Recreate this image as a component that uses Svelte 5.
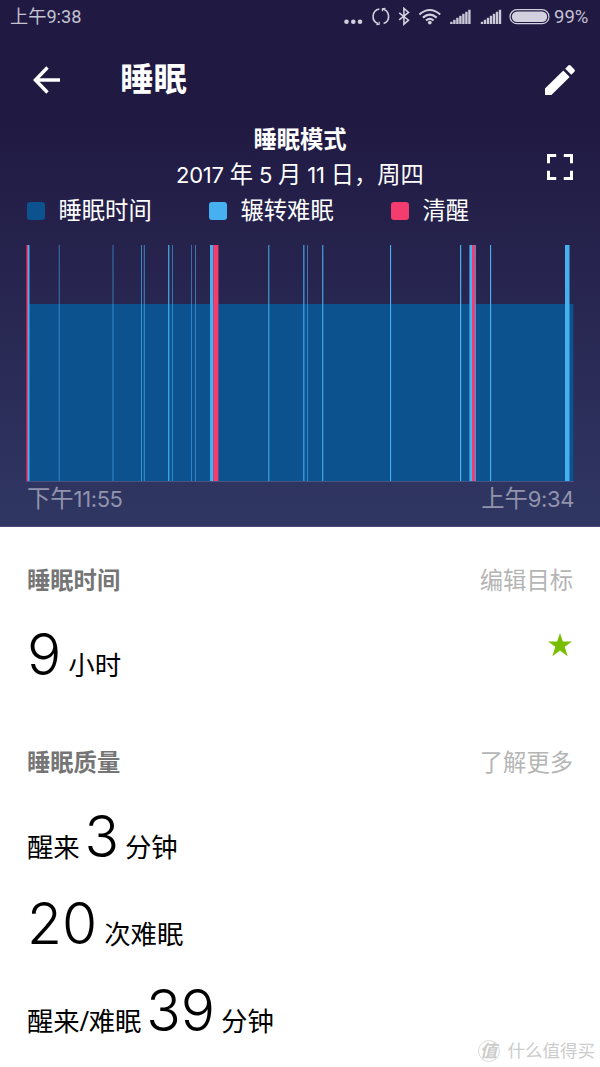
<script lang="ts">
	const legend = [
		{ label: '睡眠时间', kind: 'asleep' },
		{ label: '辗转难眠', kind: 'restless' },
		{ label: '清醒', kind: 'awake' }
	];

	// x and width are in chart pixels
	const events = [
		{ x: 0.5, w: 1.5, kind: 'awake' },
		{ x: 2, w: 1.5, kind: 'restless' },
		{ x: 32.85, w: 0.6, kind: 'restless' },
		{ x: 86.7, w: 0.6, kind: 'restless' },
		{ x: 115, w: 0.7, kind: 'restless' },
		{ x: 117.85, w: 0.7, kind: 'restless' },
		{ x: 142.15, w: 1.2, kind: 'restless' },
		{ x: 146.2, w: 0.6, kind: 'restless' },
		{ x: 165.2, w: 0.55, kind: 'restless' },
		{ x: 169.2, w: 0.6, kind: 'restless' },
		{ x: 184, w: 3.4, kind: 'restless' },
		{ x: 187.4, w: 5, kind: 'awake' },
		{ x: 242.3, w: 1, kind: 'restless' },
		{ x: 277.3, w: 1.1, kind: 'restless' },
		{ x: 281.2, w: 0.6, kind: 'restless' },
		{ x: 296.2, w: 1.1, kind: 'restless' },
		{ x: 364, w: 1.1, kind: 'restless' },
		{ x: 434, w: 1.2, kind: 'restless' },
		{ x: 443.4, w: 2.6, kind: 'restless' },
		{ x: 446, w: 3, kind: 'awake' },
		{ x: 449, w: 0.8, kind: 'restless' },
		{ x: 464, w: 1.15, kind: 'restless' },
		{ x: 539, w: 4.5, kind: 'restless' }
	];

	const quality = [
		{ before: '醒来', value: '3', after: '分钟' },
		{ before: '', value: '20', after: '次难眠' },
		{ before: '醒来/难眠', value: '39', after: '分钟' }
	];

	const signalBars = [0, 1, 2, 3, 4, 5, 6];
</script>

<div class="screen">
	<header>
		<div class="status">
			<span class="clock">上午9:38</span>
			<svg class="indicators" width="209" height="20" viewBox="0 0 209 20">
				<g fill="#d2cfde">
					<circle cx="4.5" cy="14.8" r="2.3" />
					<circle cx="11.3" cy="14.8" r="2.3" />
					<circle cx="18" cy="14.8" r="2.3" />
				</g>
				<g fill="none" stroke="#d2cfde" stroke-width="1.6">
					<path d="M37.4 2A7.6 7.6 0 0 0 36 16.6M40.4 2A7.6 7.6 0 0 1 41.6 16.6" />
					<path d="M34.4 17.7L37.2 17.2V14.8M43.4 1.3L40.4 1.8V4.2" stroke-width="1.2" />
					<path d="M57.2 5.8l9.3 7.4l-4.6 4V1.4l4.6 4l-9.3 7.4" />
				</g>
				<g fill="none" stroke="#d2cfde" stroke-width="2.1">
					<path d="M77.4 7.5Q87.8-1.5 98.2 7.5" />
					<path d="M80.9 10.6Q87.8 4.6 94.7 10.6" />
					<path d="M84 13.5Q87.8 10.3 91.6 13.5" />
				</g>
				<circle cx="87.8" cy="15.6" r="1.9" fill="#d2cfde" />
				{#each [108.2, 138.8] as start}
					{#each signalBars as i}
						<rect x={start + i * 3} y={14.8 - i * 2} width="2.4" height={2.2 + i * 2} fill="#cbc8d8" />
					{/each}
				{/each}
				<rect x="168" y="2.7" width="39" height="14" rx="7" fill="none" stroke="#d2cfde" stroke-width="1.2" />
				<rect x="169.8" y="4.5" width="35.4" height="10.4" rx="5.2" fill="#d2cfde" />
			</svg>
			<span class="battery">99%</span>
		</div>

		<div class="toolbar">
			<svg class="back" width="28" height="28" viewBox="0 0 28 28">
				<path d="M27 14H2.4M14.5 1.5L2.4 14L14.5 26.5" fill="none" stroke="#fff" stroke-width="3.4" />
			</svg>
			<h1>睡眠</h1>
			<svg class="edit" width="30" height="30" viewBox="0 0 30 30" fill="#fff">
				<path d="M0 23.6V30H6.4L24.7 11.9L18.3 5.4ZM29.4 6.7Q30.4 5.5 29.4 4.4L25.6.6Q24.4-.4 23.3.6L20.2 3.7L26.3 9.8Z" />
			</svg>
		</div>

		<div class="chart-title">
			<h2>睡眠模式</h2>
			<p>
				<span class="num">2017</span> 年 <span class="num">5</span> 月
				<span class="num">11</span> 日，周四
			</p>
			<svg class="expand" width="26" height="26" viewBox="0 0 26 26">
				<path
					d="M1.5 9.2V1.5H9.2M16.8 1.5H24.5V9.2M24.5 16.8V24.5H16.8M9.2 24.5H1.5V16.8"
					fill="none"
					stroke="#fff"
					stroke-width="3"
				/>
			</svg>
		</div>

		<ul class="legend">
			{#each legend as item}
				<li><i class={item.kind}></i>{item.label}</li>
			{/each}
		</ul>

		<svg class="chart" width="548" height="237" viewBox="0 0 548 237">
			<rect x="1" y="59" width="546.4" height="177" class="asleep" />
			{#each events as event}
				<rect x={event.x} y="0" width={event.w} height="236" class={event.kind} />
			{/each}
			<rect x="0" y="236" width="548" height="1" fill="#495483" />
		</svg>

		<div class="range">
			<span>下午<span class="num">11:55</span></span>
			<span>上午<span class="num">9:34</span></span>
		</div>
	</header>

	<section class="duration">
		<div class="section-head">
			<h3>睡眠时间</h3>
			<span>编辑目标</span>
		</div>
		<div class="stat">
			<span class="value">9</span>
			<span>小时</span>
			<svg class="star" width="24" height="24" viewBox="0 0 24 24">
				<path d="M12 0L14.8 8.4H24L16.7 13.7L19.6 23.2L12 17.5L4.4 23.2L7.3 13.7L0 8.4H9.2Z" fill="#78be00" />
			</svg>
		</div>
	</section>

	<section class="quality">
		<div class="section-head">
			<h3>睡眠质量</h3>
			<span>了解更多</span>
		</div>
		{#each quality as row}
			<div class="stat">
				{#if row.before}<span class="label">{row.before}</span>{/if}
				<span class="value">{row.value}</span>
				<span>{row.after}</span>
			</div>
		{/each}
	</section>

	<div class="watermark">
		<span class="seal">值</span>
		<span>什么值得买</span>
	</div>
</div>

<style>
	:global(body) {
		margin: 0;
		background: #fff;
	}

	.screen {
		position: relative;
		width: 600px;
		height: 1067px;
		overflow: hidden;
		background: #fff;
		color: #000;
		font-family: Lato, 'Noto Sans CJK SC', sans-serif;
	}

	h1,
	h2,
	h3,
	p,
	ul {
		margin: 0;
		padding: 0;
	}

	svg {
		display: block;
		flex: none;
	}

	header {
		box-sizing: border-box;
		height: 527px;
		background: linear-gradient(#201942 0, #201942 110px, #25224c 240px, #303763 526px);
		border-bottom: 1px solid #4d4d7c;
		color: #fff;
	}

	.status {
		display: flex;
		align-items: center;
		height: 34px;
		padding: 0 10px;
		font-family: Roboto, 'Noto Sans CJK SC', sans-serif;
		font-size: 18.5px;
		line-height: 36px;
		color: #c5c2d2;
	}

	.clock {
		font-size: 18.2px;
	}

	.indicators {
		margin-left: auto;
	}

	.battery {
		width: 36px;
		margin-left: 3px;
		font-size: 18.5px;
		white-space: nowrap;
	}

	.toolbar {
		display: flex;
		align-items: center;
		height: 92px;
		padding: 0 25px 0 33px;
	}

	h1 {
		margin: -4px 0 0 59px;
		font-size: 33.5px;
		font-weight: 700;
		line-height: 48px;
	}

	.edit {
		margin-left: auto;
	}

	.chart-title {
		display: grid;
		grid-template-columns: 1fr auto 1fr;
		grid-template-rows: 26px 44px;
		align-items: center;
		padding: 0 27px;
		text-align: center;
	}

	h2 {
		grid-column: 2;
		font-size: 23.3px;
		font-weight: 700;
		line-height: 26px;
	}

	.chart-title p {
		grid-column: 2;
		grid-row: 2;
		font-size: 23.3px;
		line-height: 47px;
		white-space: nowrap;
	}

	.num {
		font-family: Inter, sans-serif;
		font-size: 22px;
		line-height: 1;
		letter-spacing: -0.25px;
	}

	.expand {
		grid-column: 3;
		grid-row: 1 / 3;
		justify-self: end;
		margin-top: 12px;
	}

	.legend {
		display: grid;
		grid-template-columns: 182px 182px 1fr;
		height: 49px;
		padding-left: 26.5px;
		list-style: none;
		font-size: 23.3px;
		line-height: 29px;
	}

	.legend li {
		display: flex;
		align-items: center;
		height: 29px;
	}

	.legend i {
		width: 18.5px;
		height: 18px;
		margin-right: 13.5px;
		border-radius: 3px;
	}

	i.asleep {
		background: #0b528f;
	}

	i.restless {
		background: #47b0f0;
	}

	i.awake {
		background: #f53c6e;
	}

	.chart {
		margin-left: 26px;
	}

	rect.asleep {
		fill: #0b528f;
	}

	rect.restless {
		fill: #47b0f0;
	}

	rect.awake {
		fill: #f53c6e;
	}

	.range {
		display: flex;
		justify-content: space-between;
		padding: 0 26px 0 27px;
		font-size: 23.3px;
		line-height: 33px;
		color: #9194ac;
	}

	.range .num {
		letter-spacing: -0.4px;
	}

	section {
		padding: 0 27px;
	}

	.duration {
		height: 182px;
	}

	.section-head {
		display: flex;
		justify-content: space-between;
		height: 84px;
		padding-top: 36px;
		box-sizing: border-box;
		font-size: 23.3px;
		line-height: 34px;
		color: #b5b5b5;
	}

	h3 {
		font-size: 23.3px;
		font-weight: 700;
		color: #757575;
	}

	.stat {
		display: flex;
		align-items: baseline;
		height: 87px;
		font-size: 26.4px;
		line-height: 87px;
	}

	.label {
		font-family: 'Open Sans', 'Noto Sans CJK SC', sans-serif;
		letter-spacing: -0.2px;
	}

	.value {
		margin-right: 7px;
		font-family: Inter, sans-serif;
		font-size: 57px;
		font-weight: 300;
		letter-spacing: 0;
	}

	.label + .value {
		margin: 0 6px 0 5px;
	}

	.star {
		align-self: center;
		margin: -20px 1px 0 auto;
	}

	.watermark {
		position: absolute;
		right: 5px;
		bottom: 3px;
		display: flex;
		align-items: center;
		gap: 8px;
		font-size: 17.5px;
		line-height: 26px;
		color: #ccc;
	}

	.seal {
		width: 20px;
		height: 20px;
		border: 1px solid #ddd;
		border-radius: 50%;
		font-size: 17px;
		font-style: italic;
		font-weight: 700;
		line-height: 19px;
		text-align: center;
	}
</style>
